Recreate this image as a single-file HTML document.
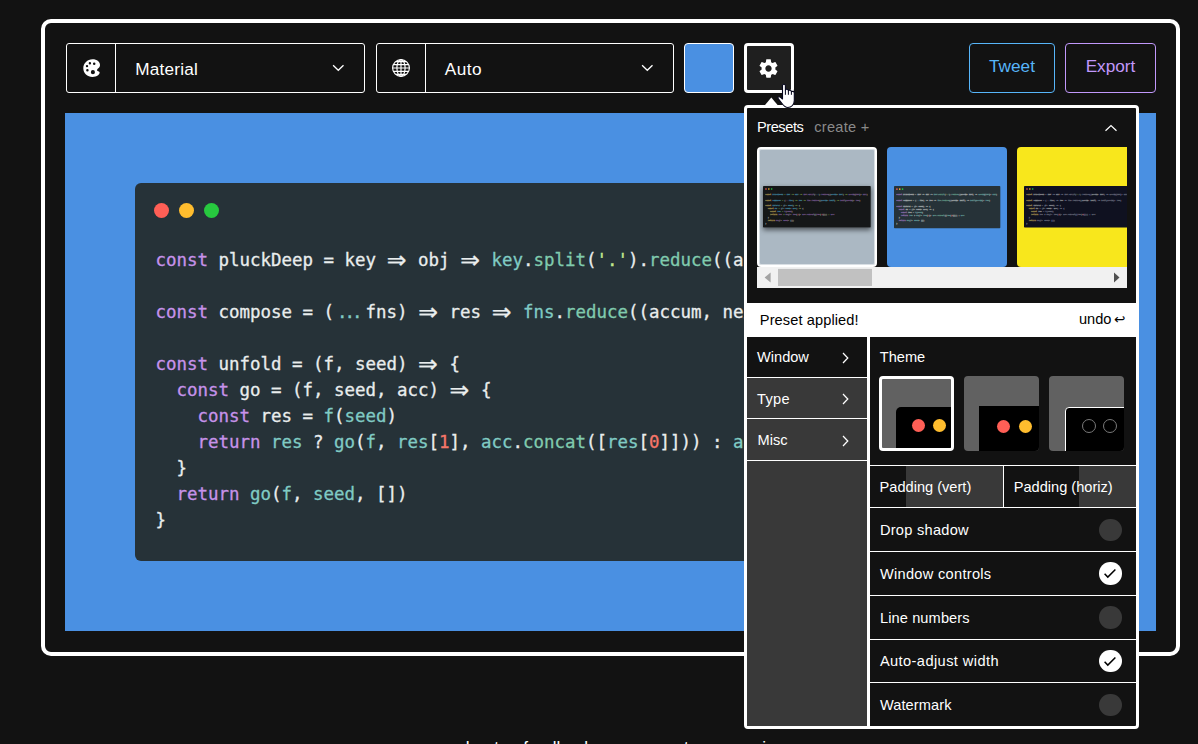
<!DOCTYPE html>
<html lang="en">
<head>
<meta charset="utf-8">
<title>Carbon</title>
<style>
*{box-sizing:border-box;margin:0;padding:0}
html,body{width:1198px;height:744px;overflow:hidden;background:#121212}
body{position:relative;font-family:"Liberation Sans",sans-serif;color:#fff;-webkit-font-smoothing:antialiased}
.abs{position:absolute}
.frame{left:41px;top:19px;width:1139px;height:637px;border:4px solid #fff;border-radius:10px}
.dd{top:43px;height:50px;border:1px solid #fff;border-radius:3px}
.dd .ic{position:absolute;left:0;top:0;width:49px;height:48px;border-right:1px solid #fff}
.dd .lbl{position:absolute;left:69px;top:0;line-height:50px;font-size:17.2px;white-space:nowrap}
.dd svg.chev{position:absolute;right:20px;top:21px}
.btn{top:43px;height:50px;border-radius:4px;font-size:17.2px;line-height:45px;text-align:center}
.editor-bg{left:65px;top:113px;width:1091px;height:518px;background:#4a90e2}
.win{left:135px;top:183px;width:951px;height:378px;background:#263238;border-radius:6px}
.dot{position:absolute;top:20px;width:15px;height:15px;border-radius:50%}
pre.code{position:absolute;left:20.5px;top:63.6px;font-family:"DejaVu Sans Mono","Liberation Mono",monospace;font-size:17.44px;line-height:26px;color:#e9eded;white-space:pre;-webkit-text-stroke:.3px}
.k{color:#c792ea}.v{color:#80cbc4}.p{color:#80cbae}.s{color:#c3e88d}.n{color:#f77669}
.ar{display:inline-block;width:2ch;text-align:center;font-family:"DejaVu Sans",sans-serif;font-size:23.5px;line-height:0;position:relative;top:2.4px;width:21px;overflow:visible;text-indent:-1px}
.el{display:inline-block;width:31.5px;text-align:center;letter-spacing:-3px;text-indent:-3px}
.pop{left:744px;top:105px;width:395px;height:624px;border:3px solid #fff;border-radius:4px;background:#121212}
.foot{left:0;top:0;width:1198px;height:744px;font-size:17.1px;white-space:nowrap;overflow:hidden}
.foot span{position:absolute;top:738.3px;line-height:20px}

.ic svg{position:absolute}
.pop .t{position:absolute;font-size:14.6px;line-height:20px;white-space:nowrap;color:#fff}
.plist{position:absolute;left:10px;top:39px;width:370px;height:141px;overflow:hidden}
.th{position:absolute;top:0;width:120px;height:120px;border-radius:4px;overflow:hidden}
.mini{position:absolute;left:0;top:0;width:951px;height:378px;transform-origin:0 0;border-radius:6px}
.mini pre.code{color:#cfd2d1;-webkit-text-stroke:2.5px;opacity:.62}
.sb{position:absolute;left:0;top:120px;width:370px;height:21px;background:#f1f1f1}
.bar{position:absolute;left:0;top:195px;width:389px;height:34px;background:#fff}
.bar .t{color:#000}
.menu{position:absolute;left:0;top:229px;width:120px;height:389px;background:#393939}
.menu .it{position:absolute;left:0;width:120px;height:41px;border-bottom:1px solid #fff}
.menu svg{position:absolute;left:94.9px}
.vdiv{position:absolute;left:120px;top:229px;width:3px;height:389px;background:#fff}
.panel{position:absolute;left:123px;top:229px;width:266px;height:389px}
.tb{position:absolute;top:39px;width:75px;height:75px;border-radius:4px;background:#616161;overflow:hidden}
.hl{position:absolute;left:0;width:266px;height:1px;background:#fff}
.tg{position:absolute;left:229.3px;width:22.5px;height:22.5px;border-radius:50%;background:#393939}
.tg.on{background:#fff}
.tg svg{position:absolute;left:0;top:0}

.seti pre.code{color:#cfd2d1}.seti .k{color:#e6cd69}.seti .d,.seti .s{color:#55b5db}.seti .v,.seti .p{color:#a074c4}.seti .o{color:#9fca56}.seti .n{color:#cd3f45}
.mat pre.code{color:#e9eded}
.owl pre.code{color:#a6accd}.owl .k{color:#e6cd69}.owl .d{color:#cfd2d1}.owl .v,.owl .p{color:#8f93a2}.owl .s{color:#c3e88d}.owl .n{color:#f78c6c}
</style>
</head>
<body>
<div class="abs frame"></div>

<!-- toolbar -->
<div class="abs dd" style="left:66px;width:299px">
  <div class="ic"><svg style="left:16px;top:15px" width="18" height="18" viewBox="0 0 18 18"><path fill="#fff" fill-rule="evenodd" d="M9.5 0.3C14 0.3 17.3 3 17 6.5C16.8 8.8 14.6 9.3 14.1 10.8C13.7 12 15 12.1 16.2 12.8C17.1 13.4 16.6 15 15.1 16.2C13.6 17.4 11.5 17.9 9.5 17.9C4.4 17.9 0.3 14.4 0.3 9.3C0.3 4.3 4.4 0.3 9.5 0.3ZM6.9 3A1.2 1.2 0 1 0 6.9 5.4A1.2 1.2 0 1 0 6.9 3ZM11.2 3.5A1.25 1.25 0 1 0 11.2 6A1.25 1.25 0 1 0 11.2 3.5ZM4 5.9A1.2 1.2 0 1 0 4 8.3A1.2 1.2 0 1 0 4 5.9ZM4.4 10.1A1.25 1.25 0 1 0 4.4 12.6A1.25 1.25 0 1 0 4.4 10.1ZM9.9 11.1A2.05 2.05 0 1 0 9.9 15.2A2.05 2.05 0 1 0 9.9 11.1Z"/></svg></div>
  <div class="lbl" style="left:68.3px;letter-spacing:.2px">Material</div>
  <svg class="chev" style="position:absolute;left:264.6px;top:20px" width="13" height="8" viewBox="0 0 13 8" fill="none" stroke="#fff" stroke-width="1.3"><path d="M1.1 1.2L6.3 6.3L11.5 1.2"/></svg>
</div>
<div class="abs dd" style="left:376px;width:298px">
  <div class="ic"><svg style="left:15px;top:15px" width="18" height="18" viewBox="-9 -9 18 18" fill="none" stroke="#fff" stroke-width="1.15"><circle r="8.4"/><ellipse rx="4.1" ry="8.4"/><path d="M0 -8.4V8.4M-8.4 0H8.4M-7.6 -3.4H7.6M-7.6 3.4H7.6M-5.3 -6.4H5.3M-5.3 6.4H5.3"/></svg></div>
  <div class="lbl" style="left:67.8px;letter-spacing:.45px">Auto</div>
  <svg class="chev" style="position:absolute;left:264.1px;top:20px" width="13" height="8" viewBox="0 0 13 8" fill="none" stroke="#fff" stroke-width="1.3"><path d="M1.1 1.2L6.3 6.3L11.5 1.2"/></svg>
</div>
<div class="abs btn" style="left:684px;width:50px;background:#4a90e2;border:1px solid #fff"></div>
<div class="abs btn" style="left:744px;width:50px;background:#1f1f1f;border:3px solid #fff"><svg style="position:absolute;left:10.3px;top:10.5px" width="23" height="23" viewBox="0 0 24 24"><path fill="#fff" d="M19.14,12.94c0.04-0.3,0.06-0.61,0.06-0.94c0-0.32-0.02-0.64-0.07-0.94l2.03-1.58c0.18-0.14,0.23-0.41,0.12-0.61l-1.92-3.32c-0.12-0.22-0.37-0.29-0.59-0.22l-2.39,0.96c-0.5-0.38-1.03-0.7-1.62-0.94L14.4,2.81c-0.04-0.24-0.24-0.41-0.48-0.41h-3.84c-0.24,0-0.43,0.17-0.47,0.41L9.25,5.35C8.66,5.59,8.12,5.92,7.63,6.29L5.24,5.33c-0.22-0.08-0.47,0-0.59,0.22L2.74,8.87C2.62,9.08,2.66,9.34,2.86,9.48l2.03,1.58C4.84,11.36,4.8,11.69,4.8,12s0.02,0.64,0.07,0.94l-2.03,1.58c-0.18,0.14-0.23,0.41-0.12,0.61l1.92,3.32c0.12,0.22,0.37,0.29,0.59,0.22l2.39-0.96c0.5,0.38,1.03,0.7,1.62,0.94l0.36,2.54c0.05,0.24,0.24,0.41,0.48,0.41h3.84c0.24,0,0.44-0.17,0.47-0.41l0.36-2.54c0.59-0.24,1.13-0.56,1.62-0.94l2.39,0.96c0.22,0.08,0.47,0,0.59-0.22l1.92-3.32c0.12-0.22,0.07-0.47-0.12-0.61L19.14,12.94z M12,15.3c-1.82,0-3.3-1.48-3.3-3.3s1.48-3.3,3.3-3.3s3.3,1.48,3.3,3.3S13.82,15.3,12,15.3z"/></svg></div>
<div class="abs btn" style="left:969px;width:86px;border:1px solid #57b5f9;color:#57b5f9">Tweet</div>
<div class="abs btn" style="left:1065px;width:91px;border:1px solid #c198fb;color:#c198fb">Export</div>

<!-- editor -->
<div class="abs editor-bg"></div>
<div class="abs win">
  <div class="dot" style="left:19px;background:#ff5f56"></div>
  <div class="dot" style="left:44px;background:#ffbd2e"></div>
  <div class="dot" style="left:69px;background:#27c93f"></div>
<pre class="code"><span class="k">const</span> pluckDeep = key <span class="ar">⇒</span> obj <span class="ar">⇒</span> <span class="v">key</span>.<span class="p">split</span>(<span class="s">'.'</span>).<span class="p">reduce</span>((accum, key) <span class="ar">⇒</span> <span class="v">accum</span>[<span class="v">key</span>], <span class="v">obj</span>)

<span class="k">const</span> compose = (<span class="v el">...</span>fns) <span class="ar">⇒</span> res <span class="ar">⇒</span> <span class="v">fns</span>.<span class="p">reduce</span>((accum, next) <span class="ar">⇒</span> <span class="v">next</span>(<span class="v">accum</span>), <span class="v">res</span>)

<span class="k">const</span> unfold = (f, seed) <span class="ar">⇒</span> {
  <span class="k">const</span> go = (f, seed, acc) <span class="ar">⇒</span> {
    <span class="k">const</span> res = <span class="v">f</span>(<span class="v">seed</span>)
    <span class="k">return</span> <span class="v">res</span> ? <span class="v">go</span>(<span class="v">f</span>, <span class="v">res</span>[<span class="n">1</span>], <span class="v">acc</span>.<span class="p">concat</span>([<span class="v">res</span>[<span class="n">0</span>]])) : <span class="v">acc</span>
  }
  <span class="k">return</span> <span class="v">go</span>(<span class="v">f</span>, <span class="v">seed</span>, [])
}</pre>
</div>

<!-- popup -->
<div class="abs pop" id="pop">
  <div class="t" id="tPresets" style="letter-spacing:-0.42px;left:9.9px;top:9.4px">Presets</div>
  <div class="t" id="tCreate" style="letter-spacing:0.25px;left:67.3px;top:9.4px;color:#8a8a8a">create +</div>
  <svg style="position:absolute;left:356.7px;top:15.7px" width="14" height="8" viewBox="0 0 14 8" fill="none" stroke="#fff" stroke-width="1.25"><path d="M1.5 6.7L7 1.5L12.5 6.7"/></svg>
  <div class="plist">
    <div class="th" style="left:0;background:#abb8c3;border:2px solid #fff;box-shadow:inset 0 0 0 1px rgba(255,255,255,.55)">
      <div class="mini seti" style="left:4.2px;top:37.2px;transform:scale(.1133,.1095);background:#151718;box-shadow:0 20px 50px rgba(0,0,0,.55)">
  <div class="dot" style="left:19px;background:#ff5f56"></div><div class="dot" style="left:44px;background:#ffbd2e"></div><div class="dot" style="left:69px;background:#27c93f"></div>
<pre class="code"><span class="k">const</span> <span class="d">pluckDeep</span> <span class="o">=</span> <span class="d">key</span> <span class="o">=&gt;</span> <span class="d">obj</span> <span class="o">=&gt;</span> <span class="v">key</span>.<span class="p">split</span>(<span class="s">'.'</span>).<span class="p">reduce</span>((<span class="d">accum</span>, <span class="d">key</span>) <span class="o">=&gt;</span> <span class="v">accum</span>[<span class="v">key</span>], <span class="v">obj</span>)

<span class="k">const</span> <span class="d">compose</span> <span class="o">=</span> (<span class="v">...</span><span class="d">fns</span>) <span class="o">=&gt;</span> <span class="d">res</span> <span class="o">=&gt;</span> <span class="v">fns</span>.<span class="p">reduce</span>((<span class="d">accum</span>, <span class="d">next</span>) <span class="o">=&gt;</span> <span class="v">next</span>(<span class="v">accum</span>), <span class="v">res</span>)

<span class="k">const</span> <span class="d">unfold</span> <span class="o">=</span> (<span class="d">f</span>, <span class="d">seed</span>) <span class="o">=&gt;</span> {
  <span class="k">const</span> <span class="d">go</span> <span class="o">=</span> (<span class="d">f</span>, <span class="d">seed</span>, <span class="d">acc</span>) <span class="o">=&gt;</span> {
    <span class="k">const</span> <span class="d">res</span> <span class="o">=</span> <span class="v">f</span>(<span class="v">seed</span>)
    <span class="k">return</span> <span class="v">res</span> <span class="o">?</span> <span class="v">go</span>(<span class="v">f</span>, <span class="v">res</span>[<span class="n">1</span>], <span class="v">acc</span>.<span class="p">concat</span>([<span class="v">res</span>[<span class="n">0</span>]])) <span class="o">:</span> <span class="v">acc</span>
  }
  <span class="k">return</span> <span class="v">go</span>(<span class="v">f</span>, <span class="v">seed</span>, [])
}</pre></div>
    </div>
    <div class="th" style="left:130px;background:#4a90e2">
      <div class="mini mat" style="left:6.7px;top:39.2px;transform:scale(.1118,.1115);background:#263238">
  <div class="dot" style="left:19px;background:#ff5f56"></div><div class="dot" style="left:44px;background:#ffbd2e"></div><div class="dot" style="left:69px;background:#27c93f"></div>
<pre class="code"><span class="k">const</span> <span class="d">pluckDeep</span> <span class="o">=</span> <span class="d">key</span> <span class="o">=&gt;</span> <span class="d">obj</span> <span class="o">=&gt;</span> <span class="v">key</span>.<span class="p">split</span>(<span class="s">'.'</span>).<span class="p">reduce</span>((<span class="d">accum</span>, <span class="d">key</span>) <span class="o">=&gt;</span> <span class="v">accum</span>[<span class="v">key</span>], <span class="v">obj</span>)

<span class="k">const</span> <span class="d">compose</span> <span class="o">=</span> (<span class="v">...</span><span class="d">fns</span>) <span class="o">=&gt;</span> <span class="d">res</span> <span class="o">=&gt;</span> <span class="v">fns</span>.<span class="p">reduce</span>((<span class="d">accum</span>, <span class="d">next</span>) <span class="o">=&gt;</span> <span class="v">next</span>(<span class="v">accum</span>), <span class="v">res</span>)

<span class="k">const</span> <span class="d">unfold</span> <span class="o">=</span> (<span class="d">f</span>, <span class="d">seed</span>) <span class="o">=&gt;</span> {
  <span class="k">const</span> <span class="d">go</span> <span class="o">=</span> (<span class="d">f</span>, <span class="d">seed</span>, <span class="d">acc</span>) <span class="o">=&gt;</span> {
    <span class="k">const</span> <span class="d">res</span> <span class="o">=</span> <span class="v">f</span>(<span class="v">seed</span>)
    <span class="k">return</span> <span class="v">res</span> <span class="o">?</span> <span class="v">go</span>(<span class="v">f</span>, <span class="v">res</span>[<span class="n">1</span>], <span class="v">acc</span>.<span class="p">concat</span>([<span class="v">res</span>[<span class="n">0</span>]])) <span class="o">:</span> <span class="v">acc</span>
  }
  <span class="k">return</span> <span class="v">go</span>(<span class="v">f</span>, <span class="v">seed</span>, [])
}</pre></div>
    </div>
    <div class="th" style="left:260px;background:#f8e71c">
      <div class="mini owl" style="left:7px;top:39.2px;transform:scale(.1133,.1095);background:#0f1120">
  <div class="dot" style="left:19px;background:#ff5f56"></div><div class="dot" style="left:44px;background:#ffbd2e"></div><div class="dot" style="left:69px;background:#27c93f"></div>
<pre class="code"><span class="k">const</span> <span class="d">pluckDeep</span> <span class="o">=</span> <span class="d">key</span> <span class="o">=&gt;</span> <span class="d">obj</span> <span class="o">=&gt;</span> <span class="v">key</span>.<span class="p">split</span>(<span class="s">'.'</span>).<span class="p">reduce</span>((<span class="d">accum</span>, <span class="d">key</span>) <span class="o">=&gt;</span> <span class="v">accum</span>[<span class="v">key</span>], <span class="v">obj</span>)

<span class="k">const</span> <span class="d">compose</span> <span class="o">=</span> (<span class="v">...</span><span class="d">fns</span>) <span class="o">=&gt;</span> <span class="d">res</span> <span class="o">=&gt;</span> <span class="v">fns</span>.<span class="p">reduce</span>((<span class="d">accum</span>, <span class="d">next</span>) <span class="o">=&gt;</span> <span class="v">next</span>(<span class="v">accum</span>), <span class="v">res</span>)

<span class="k">const</span> <span class="d">unfold</span> <span class="o">=</span> (<span class="d">f</span>, <span class="d">seed</span>) <span class="o">=&gt;</span> {
  <span class="k">const</span> <span class="d">go</span> <span class="o">=</span> (<span class="d">f</span>, <span class="d">seed</span>, <span class="d">acc</span>) <span class="o">=&gt;</span> {
    <span class="k">const</span> <span class="d">res</span> <span class="o">=</span> <span class="v">f</span>(<span class="v">seed</span>)
    <span class="k">return</span> <span class="v">res</span> <span class="o">?</span> <span class="v">go</span>(<span class="v">f</span>, <span class="v">res</span>[<span class="n">1</span>], <span class="v">acc</span>.<span class="p">concat</span>([<span class="v">res</span>[<span class="n">0</span>]])) <span class="o">:</span> <span class="v">acc</span>
  }
  <span class="k">return</span> <span class="v">go</span>(<span class="v">f</span>, <span class="v">seed</span>, [])
}</pre></div>
    </div>
    <div class="sb">
      <svg style="position:absolute;left:0;top:0" width="370" height="21" viewBox="0 0 370 21"><rect x="21" y="1.9" width="94" height="17.1" fill="#c1c1c1"/><path d="M13.6 5.6V15.4L7.6 10.5Z" fill="#a3a3a3"/><path d="M357 5.6V15.4L362.5 10.5Z" fill="#505050"/></svg>
    </div>
  </div>
  <div class="bar">
    <div class="t" id="tApplied" style="letter-spacing:0.1px;left:12.8px;top:7px">Preset applied!</div>
    <div class="t" id="tUndo" style="left:332px;top:6px">undo</div>
    <div class="t" id="tUndoArrow" style="left:367.3px;top:6px;font-family:'DejaVu Sans',sans-serif;font-size:13.5px">↩</div>
  </div>
  <div class="menu">
    <div class="it" style="top:0;background:#121212;height:41px"><div class="t" id="tWindow" style="left:10px;top:9.5px">Window</div><svg style="top:15.2px" width="8" height="13" viewBox="0 0 8 13" fill="none" stroke="#fff" stroke-width="1.25"><path d="M1 1L5.8 6L1 11"/></svg></div>
    <div class="it" style="top:41px"><div class="t" id="tType" style="letter-spacing:0.3px;left:10px;top:11px">Type</div><svg style="top:15.2px" width="8" height="13" viewBox="0 0 8 13" fill="none" stroke="#fff" stroke-width="1.25"><path d="M1 1L5.8 6L1 11"/></svg></div>
    <div class="it" style="top:82px;height:42px"><div class="t" id="tMisc" style="left:10.5px;top:11px">Misc</div><svg style="top:15.7px" width="8" height="13" viewBox="0 0 8 13" fill="none" stroke="#fff" stroke-width="1.25"><path d="M1 1L5.8 6L1 11"/></svg></div>
  </div>
  <div class="vdiv"></div>
  <div class="panel">
    <div class="t" id="tTheme" style="left:9.8px;top:9.5px">Theme</div>
    <div class="tb" style="left:9px;border:3px solid #fff">
      <div style="position:absolute;left:13.6px;top:27.6px;width:70px;height:60px;background:#000;border-radius:5px"></div>
      <div class="dot" style="left:30px;top:40px;width:13px;height:13px;background:#ff5f56"></div>
      <div class="dot" style="left:50.5px;top:40px;width:13px;height:13px;background:#ffbd2e"></div>
    </div>
    <div class="tb" style="left:94px">
      <div style="position:absolute;left:15px;top:30px;width:70px;height:60px;background:#000"></div>
      <div class="dot" style="left:33.2px;top:43.8px;width:13.2px;height:13.2px;background:#ff5f56"></div>
      <div class="dot" style="left:55px;top:43.8px;width:13.2px;height:13.2px;background:#ffbd2e"></div>
    </div>
    <div class="tb" style="left:179px">
      <div style="position:absolute;left:16px;top:31px;width:70px;height:60px;background:#000;border:1px solid #fff;border-radius:4px 0 0 0"></div>
      <div class="dot" style="left:32.5px;top:43.4px;width:14px;height:14px;border:1px solid #7a7a7a"></div>
      <div class="dot" style="left:54.4px;top:43.4px;width:14px;height:14px;border:1px solid #7a7a7a"></div>
    </div>
    <div class="hl" style="top:128px"></div>
    <div style="position:absolute;left:0;top:129px;width:133px;height:41px;overflow:hidden"><div style="position:absolute;left:36px;top:0;width:133px;height:41px;background:#393939"></div><div class="t" id="tPv" style="left:9.6px;top:11px">Padding (vert)</div></div>
    <div style="position:absolute;left:133px;top:129px;width:1px;height:41px;background:#fff"></div>
    <div style="position:absolute;left:134px;top:129px;width:132px;height:41px;overflow:hidden"><div style="position:absolute;left:74.6px;top:0;width:133px;height:41px;background:#393939"></div><div class="t" id="tPh" style="left:9.7px;top:11px">Padding (horiz)</div></div>
    <div class="hl" style="top:170px"></div>
    <div class="t" id="tDrop" style="letter-spacing:0.27px;left:9.9px;top:183px">Drop shadow</div><div class="tg" style="top:181.7px"></div>
    <div class="hl" style="top:214px"></div>
    <div class="t" id="tWc" style="letter-spacing:0.3px;left:9.9px;top:226.5px">Window controls</div><div class="tg on" style="top:225.3px"><svg width="22.5" height="22.5" viewBox="0 0 22.5 22.5" fill="none" stroke="#000" stroke-width="1.5"><path d="M5.6 11.7L8.8 15.1L16.4 7.5"/></svg></div>
    <div class="hl" style="top:258px"></div>
    <div class="t" id="tLn" style="letter-spacing:0.12px;left:9.9px;top:270.5px">Line numbers</div><div class="tg" style="top:269.3px"></div>
    <div class="hl" style="top:302px"></div>
    <div class="t" id="tAa" style="letter-spacing:0.42px;left:9.9px;top:314px">Auto-adjust width</div><div class="tg on" style="top:312.9px"><svg width="22.5" height="22.5" viewBox="0 0 22.5 22.5" fill="none" stroke="#000" stroke-width="1.5"><path d="M5.6 11.7L8.8 15.1L16.4 7.5"/></svg></div>
    <div class="hl" style="top:345px"></div>
    <div class="t" id="tWm" style="letter-spacing:0.1px;left:9.9px;top:357.5px">Watermark</div><div class="tg" style="top:356.5px"></div>
  </div>
</div>


<svg class="abs" style="left:763px;top:97px" width="16" height="9" viewBox="0 0 16 9"><path fill="#fff" d="M8.3 0.4L15.4 9H1.2Z"/></svg>
<svg class="abs" id="cursor" style="left:776px;top:83px" width="20" height="26" viewBox="-1 -1 20 26"><path fill="#fff" stroke="#06061c" stroke-width="1.1" stroke-linejoin="round" d="M5.5 1.7C5.5 0.7 6.2 0.3 7 0.3C7.8 0.3 8.4 0.7 8.4 1.7V6C8.5 5.4 9 5.2 9.8 5.2C10.8 5.2 11.4 5.8 11.4 6.8C11.6 6.4 12.2 6.3 12.9 6.3C13.8 6.3 14.4 6.9 14.4 7.8C14.6 7.5 15.2 7.4 15.8 7.4C16.7 7.4 17.3 8 17.3 9V16.5C17.3 20.5 14.5 23.5 10.8 23.5C8 23.5 6.5 21.5 5 19.5L1.2 14.6C0.6 13.8 0.8 13.2 1.4 12.9C2 12.6 2.8 12.8 3.6 13.4L5.5 15Z"/><path fill="none" stroke="#06061c" stroke-width="1" d="M8.4 6V10.8M11.4 6.8V10.8M14.4 7.8V10.8"/></svg>
<div class="abs foot"><span style="left:456.3px">about</span><span style="left:523.3px">feedback</span><span style="left:613px">source</span><span style="left:684px">terms</span><span style="left:747px">privacy</span></div>
</body>
</html>
